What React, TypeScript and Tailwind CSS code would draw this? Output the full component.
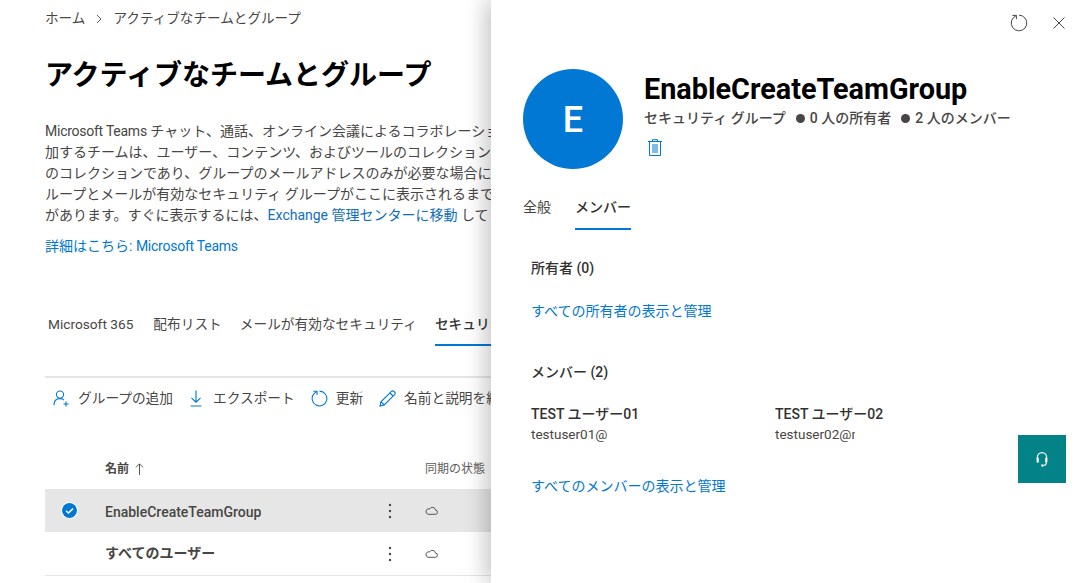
import React from "react";

const font = { fontFamily: 'Roboto,"Noto Sans CJK JP",sans-serif' };

function Tab({ children, active, className = "" }: { children: React.ReactNode; active?: boolean; className?: string }) {
  return (
    <div className={`flex shrink-0 items-center whitespace-nowrap border-b-[2px] ${active ? "border-[#0078d4] font-medium text-[#323130]" : "border-transparent text-[#484644]"} ${className}`}>
      {children}
    </div>
  );
}

function Cloud() {
  return (
    <svg className="shrink-0" width="13" height="9" viewBox="0 0 13 9" fill="none" stroke="#484644" strokeWidth="0.9">
      <path d="M3 8.3h7.2a2.1 2.1 0 0 0 .3-4.2A3.1 3.1 0 0 0 4.7 2.9 2.7 2.7 0 0 0 3 8.3z" />
    </svg>
  );
}

function Kebab() {
  return (
    <svg className="shrink-0" width="4" height="16" viewBox="0 0 4 16" fill="#484644">
      <circle cx="2" cy="2" r="1.2" />
      <circle cx="2" cy="8" r="1.2" />
      <circle cx="2" cy="14" r="1.2" />
    </svg>
  );
}

function Refresh({ size, color, width }: { size: number; color: string; width: number }) {
  return (
    <svg className="shrink-0" width={size} height={size} viewBox="0 0 18 18" fill="none" stroke={color} strokeWidth={width}>
      <path d="M9 1.2A7.8 7.8 0 1 1 3.2 3.8L6.4 1.4" />
      <path d="M2.4 1.4H6.4V5.2" />
    </svg>
  );
}

export default function App() {
  return (
    <div className="flex h-[583px] w-[1083px] overflow-hidden bg-white" style={font}>
      <div className="h-[583px] w-[491px] shrink-0 overflow-hidden pl-[45px]">
        <div className="flex h-[37px] items-center whitespace-nowrap text-[13.6px] text-[#484644]">
          <span>ホーム</span>
          <svg className="mx-[10px] shrink-0" width="8" height="10" viewBox="0 0 8 10" fill="none" stroke="#605e5c" strokeWidth="1">
            <path d="M2 1l4 4-4 4" />
          </svg>
          <span>アクティブなチームとグループ</span>
        </div>
        <h1 className="mt-[18px] h-[42px] whitespace-nowrap text-[28px] font-bold leading-[42px] text-black">アクティブなチームとグループ</h1>
        <div className="mt-[24px] whitespace-nowrap text-[14px] leading-[21px] text-[#484644]">
          <div><span className="tracking-[-0.25px]">Microsoft Teams</span> チャット、通話、オンライン会議によるコラボレーションを実現します。</div>
          <div>加するチームは、ユーザー、コンテンツ、およびツールのコレクションです。</div>
          <div>のコレクションであり、グループのメールアドレスのみが必要な場合に役立ちます。</div>
          <div>ループとメールが有効なセキュリティ グループがここに表示されるまでに時間</div>
          <div>があります。すぐに表示するには、<span className="text-[#106ebe]">Exchange 管理センターに移動</span> してください。</div>
        </div>
        <div className="mt-[10px] text-[14px] leading-[21px] text-[#0078d4]">詳細はこちら: <span className="tracking-[-0.25px]">Microsoft Teams</span></div>

        <div className="ml-[3px] mt-[46px] flex gap-[18px] text-[13.7px]">
          <Tab className="mr-[2px] h-[43px] pt-[1px]">Microsoft 365</Tab>
          <Tab className="h-[43px] pt-[1px]">配布リスト</Tab>
          <Tab className="h-[43px] pt-[1px]">メールが有効なセキュリティ</Tab>
          <Tab active className="h-[43px] pr-[40px] pt-[1px]">セキュリティ グループ</Tab>
        </div>

        <div className="mt-[30px] flex h-[42px] items-center whitespace-nowrap border-t-2 border-[#e5e5e5] pl-[8px] text-[13.7px] text-[#484644]">
          <svg className="mr-[8px] shrink-0" width="17" height="17" viewBox="0 0 17 17" fill="none" stroke="#0078d4" strokeWidth="1.1">
            <circle cx="7" cy="4.6" r="3.6" />
            <path d="M1 15c0-3.6 2-6.4 6-6.4 1.7 0 3 .5 4 1.5" />
            <path d="M13 11.5v5M10.5 14h5" />
          </svg>
          <span>グループの追加</span>
          <svg className="ml-[17px] mr-[11px] shrink-0" width="12" height="17" viewBox="0 0 12 17" fill="none" stroke="#0078d4" strokeWidth="1.1">
            <path d="M6 0.5v11.5M1.5 7.8 6 12.2l4.5-4.4M0.5 16h11" />
          </svg>
          <span>エクスポート</span>
          <span className="ml-[16px] mr-[8px] flex"><Refresh size={17} color="#0078d4" width={1.1} /></span>
          <span>更新</span>
          <svg className="ml-[16px] mr-[8px] shrink-0" width="17" height="17" viewBox="0 0 17 17" fill="none" stroke="#0078d4" strokeWidth="1.1">
            <path d="M1 16l1-4.2L12.4 1.4a1.8 1.8 0 0 1 2.6 0l.6.6a1.8 1.8 0 0 1 0 2.6L5.2 15z" />
            <path d="M11 3l3 3M2 11.8 5.2 15" />
          </svg>
          <span>名前と説明を編集</span>
        </div>

        <div className="mt-[30px] flex h-[41px] items-center whitespace-nowrap">
          <span className="ml-[60px] flex w-[320px] items-center text-[12px] font-bold text-[#484644]">
            名前
            <svg className="ml-[6px] shrink-0" width="9" height="12" viewBox="0 0 9 12" fill="none" stroke="#484644" strokeWidth="0.9">
              <path d="M4.5 12V1M1 4.3 4.5 0.8 8 4.3" />
            </svg>
          </span>
          <span className="text-[12px] text-[#605e5c]">同期の状態</span>
        </div>

        <div className="flex h-[43px] items-center bg-[#e6e6e6]">
          <div className="flex w-[60px] justify-center pr-[12px]">
            <svg className="shrink-0" width="17" height="17" viewBox="0 0 17 17">
              <circle cx="8.5" cy="8.5" r="8.5" fill="#fff" />
              <circle cx="8.5" cy="8.5" r="7.5" fill="#0078d4" />
              <path d="M5 8.8l2.4 2.2L12 6.6" fill="none" stroke="#fff" strokeWidth="1.5" />
            </svg>
          </div>
          <div className="w-[280px] whitespace-nowrap pt-[3px] text-[14px] font-medium text-[#484644]">EnableCreateTeamGroup</div>
          <div className="flex w-[40px] pl-[3px]"><Kebab /></div>
          <Cloud />
        </div>
        <div className="flex h-[44px] items-center border-b border-[#e5e5e5]">
          <div className="w-[60px]" />
          <div className="w-[280px] whitespace-nowrap text-[14px] font-bold text-[#484644]">すべてのユーザー</div>
          <div className="flex w-[40px] pl-[3px]"><Kebab /></div>
          <Cloud />
        </div>
      </div>

      <div className="z-10 h-[583px] w-[592px] shrink-0 bg-white pl-[32px] shadow-[-6px_0_20px_rgba(0,0,0,0.22)]">
        <div className="flex h-[46px] items-center justify-end gap-[24px] pr-[17px]">
          <Refresh size={18} color="#484644" width={1} />
          <svg className="shrink-0" width="14" height="14" viewBox="0 0 14 14" fill="none" stroke="#484644" strokeWidth="1">
            <path d="M1.5 1.5l11 11M12.5 1.5l-11 11" />
          </svg>
        </div>
        <div className="mt-[23px] flex">
          <div className="flex h-[100px] w-[100px] items-center justify-center rounded-full bg-[#0078d4] pt-[2px] text-[36px] font-medium leading-none text-white">E</div>
          <div className="ml-[21px]">
            <div className="text-[28.8px] font-bold leading-[40px] text-black">EnableCreateTeamGroup</div>
            <div className="-mt-[1px] flex items-center whitespace-nowrap text-[14px] font-medium leading-[20px] text-[#484644]">
              <span>セキュリティ グループ</span>
              <span className="ml-[10px] mr-[5px] h-[9px] w-[9px] rounded-full bg-[#484644]" />
              <span>0 人の所有者</span>
              <span className="ml-[10px] mr-[5px] h-[9px] w-[9px] rounded-full bg-[#484644]" />
              <span>2 人のメンバー</span>
            </div>
            <svg className="ml-[4px] mt-[11px]" width="14" height="17" viewBox="0 0 14 17" fill="none" stroke="#0078d4" strokeWidth="1">
              <path d="M0 2.5h14M4.5 2.5V.7h5v1.8M1.5 2.5v14h11v-14M5 5v9M7 5v9M9 5v9" />
            </svg>
          </div>
        </div>
        <div className="mt-[15px] flex gap-[24px] text-[14px]">
          <Tab className="h-[46px] pt-[2px] text-[#605e5c]">全般</Tab>
          <Tab active className="h-[46px] pt-[2px]">メンバー</Tab>
        </div>

        <div className="pl-[8px]">
          <div className="mt-[28px] text-[14px] font-medium leading-[20px] text-[#323130]">所有者 (0)</div>
          <div className="mt-[23px] text-[14px] leading-[20px] text-[#0078d4]">すべての所有者の表示と管理</div>
          <div className="mt-[41px] text-[14px] font-medium leading-[20px] text-[#323130]">メンバー (2)</div>
          <div className="mt-[22px] flex">
            <div className="w-[244px]">
              <div className="text-[14px] font-medium leading-[20px] text-[#323130]">TEST ユーザー01</div>
              <div className="text-[13.5px] leading-[20px] text-[#484644]">testuser01@</div>
            </div>
            <div>
              <div className="text-[14px] font-medium leading-[20px] text-[#323130]">TEST ユーザー02</div>
              <div className="w-[80px] overflow-hidden whitespace-nowrap text-[13.5px] leading-[20px] text-[#484644]">testuser02@m</div>
            </div>
          </div>
          <div className="mt-[32px] text-[14px] leading-[20px] text-[#0078d4]">すべてのメンバーの表示と管理</div>
        </div>

        <div className="absolute left-[1018px] top-[435px] flex h-[48px] w-[48px] items-center justify-center bg-[#038387]">
          <svg width="14" height="17" viewBox="0 0 14 17" fill="none" stroke="#fff" strokeWidth="1.2">
            <path d="M2.4 8V6.2a4.6 4.6 0 0 1 9.2 0V8" />
            <rect x="1.6" y="6.6" width="2.2" height="5.2" rx="1" fill="#fff" stroke="none" />
            <rect x="10.2" y="6.6" width="2.2" height="5.2" rx="1" fill="#fff" stroke="none" />
            <path d="M11.3 11.5c0 2-1.3 3-3.3 3" />
            <circle cx="7.4" cy="14.5" r="1.2" fill="#fff" stroke="none" />
          </svg>
        </div>
      </div>
    </div>
  );
}
